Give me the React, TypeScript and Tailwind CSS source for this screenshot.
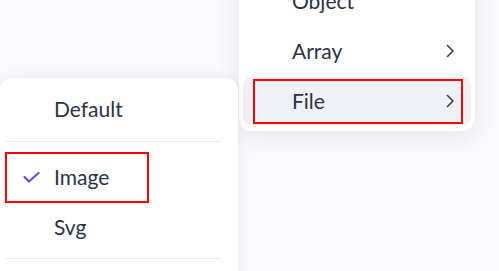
import { ReactNode } from 'react';

function Chevron() {
    return (
        <svg width="10" height="14" viewBox="0 0 10 14" fill="none" className="text-[#3a3f4f]">
            <path d="M2.5 1.5 L8 7 L2.5 12.5" stroke="currentColor" strokeWidth="1.6" strokeLinecap="round" strokeLinejoin="round" />
        </svg>
    );
}

function Check() {
    return (
        <svg width="17" height="11" viewBox="0 0 17 11" fill="none" className="text-[#5a4ff2]">
            <path d="M1.5 5 L6 9.5 L15.5 1" stroke="currentColor" strokeWidth="2.2" strokeLinecap="round" strokeLinejoin="round" />
        </svg>
    );
}

function MenuRow({ label, active, hasSub }: { label: string; active?: boolean; hasSub?: boolean }) {
    return (
        <div
            className={`flex h-12 items-center justify-between rounded-lg pr-4 pl-[49px] ${active ? 'bg-[#f0f1f7]' : ''}`}
        >
            <span>{label}</span>
            {hasSub && <Chevron />}
        </div>
    );
}

function SubRow({ label, checked }: { label: string; checked?: boolean }) {
    return (
        <div className="flex h-[50px] items-center">
            <span className="flex w-[48px] justify-center pl-[2px]">{checked && <Check />}</span>
            <span>{label}</span>
        </div>
    );
}

function Annotation({ className }: { className: string }) {
    return <div className={`pointer-events-none absolute border-[2.5px] border-[#ff0000] ${className}`} />;
}

export default function App(): ReactNode {
    return (
        <div
            className="relative h-[271px] w-[499px] overflow-hidden bg-[#fafafc] text-[21px] text-[#2c3344]"
            style={{ fontFamily: 'Lato, "Noto Sans", sans-serif' }}
        >
            {/* parent menu */}
            <div className="absolute top-[-27px] left-[239px] flex w-[236px] flex-col gap-[2px] rounded-xl bg-white p-1 pb-[6px] shadow-[0_4px_24px_rgba(30,30,60,0.10)]">
                <MenuRow label="Object" />
                <MenuRow label="Array" hasSub />
                <MenuRow label="File" active hasSub />
            </div>

            {/* submenu */}
            <div className="absolute top-[78px] left-0 z-10 h-[220px] w-[238px] rounded-xl bg-white pt-[6px] pr-4 pl-[6px] shadow-[0_2px_16px_rgba(30,30,60,0.08)]">
                <SubRow label="Default" />
                <div className="mt-[7px] mb-[10px] h-px bg-[#ebebef]" />
                <SubRow label="Image" checked />
                <SubRow label="Svg" />
                <div className="mt-[6px] h-px bg-[#ebebef]" />
            </div>

            <Annotation className="top-[152px] left-[5px] z-20 h-[51px] w-[144px]" />
            <Annotation className="top-[79px] left-[253px] z-20 h-[45px] w-[210px]" />
        </div>
    );
}
